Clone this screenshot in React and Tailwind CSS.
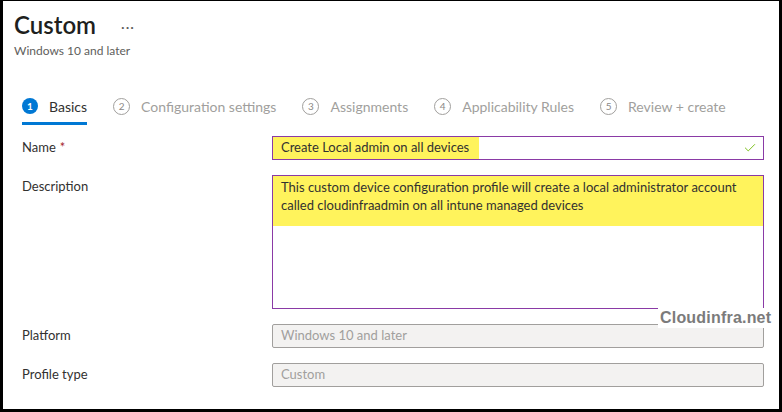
import { Check } from "lucide-react";

const steps = [
  { n: 1, label: "Basics", active: true },
  { n: 2, label: "Configuration settings" },
  { n: 3, label: "Assignments" },
  { n: 4, label: "Applicability Rules" },
  { n: 5, label: "Review + create" },
];

const font = { fontFamily: '"Segoe UI", Lato, "Noto Sans", sans-serif' };

const Row = ({ label, required, children, top }) => (
  <div className={`flex ${top ? "items-start" : "items-center"}`}>
    <div className={`w-[250px] text-[13px] text-[#323130] ${top ? "pt-[2px]" : ""}`}>
      {label}
      {required && <span className="text-[#a4262c] ml-[4px]">*</span>}
    </div>
    {children}
  </div>
);

export default function App() {
  return (
    <div
      className="w-[782px] h-[412px] border-black border-l-[3px] border-r-[3px] border-b-[3px] border-t-[1px] bg-white"
      style={font}
    >
      <div className="relative h-full">
        <div className="pl-[11px] pt-[9px]">
          <div className="flex items-center">
            <h1 className="text-[24px] leading-[30px] font-semibold text-[#201f1e]">Custom</h1>
            <span className="ml-[25px] text-[14px] text-[#605e5c] tracking-[1px] mt-[2px]">···</span>
          </div>
          <p className="text-[12px] leading-[16px] text-[#605e5c] mt-[3px]">Windows 10 and later</p>
        </div>

        <div className="flex items-start gap-[26px] pl-[19px] mt-[37px]">
          {steps.map((s) => (
            <div key={s.n} className="flex flex-col">
              <div className="flex items-center gap-[11px] h-[20px]">
                {s.active ? (
                  <span className="w-[16px] h-[16px] rounded-full bg-[#0078d4] text-white text-[10px] font-bold flex items-center justify-center">
                    {s.n}
                  </span>
                ) : (
                  <span className="w-[17px] h-[17px] rounded-full border border-[#a19f9d] text-[#8a8886] text-[10px] flex items-center justify-center">
                    {s.n}
                  </span>
                )}
                <span
                  className={`text-[14px] ${s.active ? "text-[#323130]" : "text-[#a19f9d]"}`}
                >
                  {s.label}
                </span>
              </div>
              {s.active && <div className="h-[3px] bg-[#0078d4] mt-[6px]" />}
            </div>
          ))}
        </div>

        <div className="pl-[19px] pr-[15px] mt-[11px] flex flex-col gap-[15px]">
          <Row label="Name" required>
            <div className="flex-1 h-[24px] border border-[#8a3aa6] flex items-center">
              <span className="h-full flex items-center bg-[#fff35c] pl-[8px] pr-[10px] text-[13px] text-[#323130]">
                Create Local admin on all devices
              </span>
              <span className="flex-1" />
              <Check className="w-[14px] h-[14px] text-[#6bb700] mr-[6px]" strokeWidth={1.5} />
            </div>
          </Row>
          <Row label="Description" top>
            <div className="flex-1 h-[134px] border border-[#8a3aa6]">
              <div className="bg-[#fff35c] h-[50px] px-[8px] pt-[2px] text-[13px] leading-[18px] text-[#323130]">
                This custom device configuration profile will create a local administrator account
                <br />
                called cloudinfraadmin on all intune managed devices
              </div>
            </div>
          </Row>
          <Row label="Platform">
            <div className="flex-1 h-[24px] border border-[#a19f9d] rounded-[2px] bg-[#f3f2f1] flex items-center pl-[8px] text-[13px] text-[#a19f9d]">
              Windows 10 and later
            </div>
          </Row>
          <Row label="Profile type">
            <div className="flex-1 h-[24px] border border-[#a19f9d] rounded-[2px] bg-[#f3f2f1] flex items-center pl-[8px] text-[13px] text-[#a19f9d]">
              Custom
            </div>
          </Row>
        </div>

        <div
          className="absolute left-[655px] top-[307px] bg-white px-[2px] text-[16px] leading-[20px] font-bold text-[#7b7b7b] tracking-[0.2px]"
          style={{ fontFamily: '"Liberation Sans", sans-serif' }}
        >
          Cloudinfra.net
        </div>
      </div>
    </div>
  );
}
